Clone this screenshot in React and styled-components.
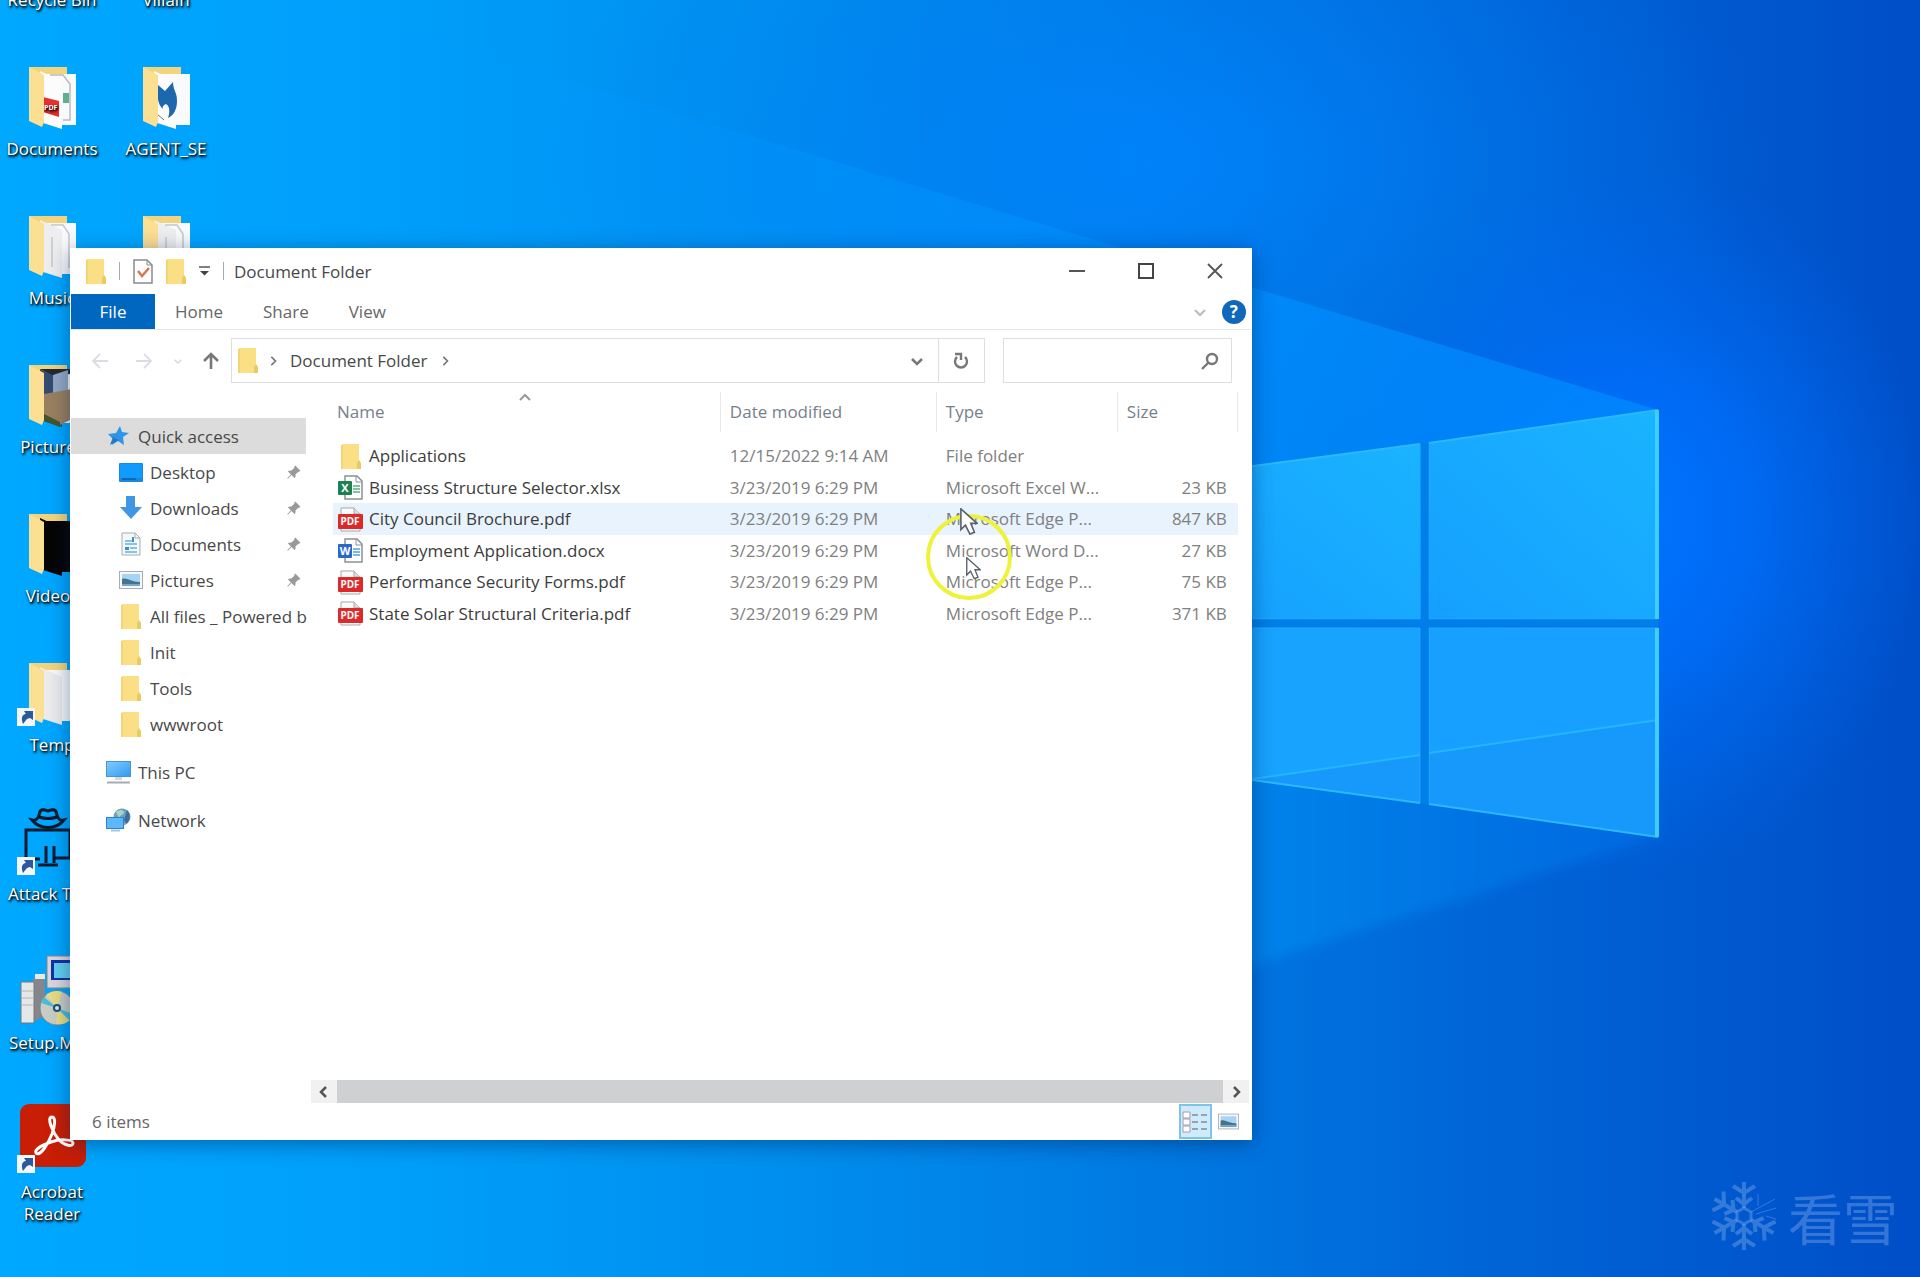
import React from "react";
import styled, { createGlobalStyle } from "styled-components";
import { BsPinAngleFill } from "react-icons/bs";

const GlobalStyle = createGlobalStyle`
  * {
    box-sizing: border-box;
  }
  body {
    margin: 0;
    font-family: "Open Sans", "Noto Sans", sans-serif;
    font-size: 17px;
    color: #484848;
  }
  button {
    border: none;
    background: none;
    padding: 0;
    font: inherit;
    color: inherit;
  }
  svg {
    display: block;
    flex-shrink: 0;
  }
`;

/* ---------- icons ---------- */

const FolderIcon = () => (
  <svg width="20" height="25" viewBox="0 0 20 25">
    <path d="M1 0h17v17l2 2v6H1z" fill="#fbdf85" />
    <path d="M0 1h2v24H0z" fill="#f5d478" />
    <path d="M16 25v-6l2-3 2 3v6z" fill="#e9cb63" />
  </svg>
);

const CheckDocIcon = () => (
  <svg width="20" height="25" viewBox="0 0 20 25">
    <path d="M1 1h13l5 5v18H1z" fill="#fff" stroke="#8b8b8f" strokeWidth="1.5" />
    <path d="M14 1v5h5" fill="none" stroke="#8b8b8f" />
    <path d="M5 12l4 5 7-8" fill="none" stroke="#e0744f" strokeWidth="2.5" />
  </svg>
);

const Chevron = ({ dir = "down", size = 12, color = "#777", weight = 2 }) => {
  const turn = { down: 0, left: 90, up: 180, right: 270 }[dir];
  return (
    <svg width={size} height={size} viewBox="0 0 12 12">
      <path
        d="M1 4l5 5 5-5"
        fill="none"
        stroke={color}
        strokeWidth={weight}
        transform={`rotate(${turn} 6 6)`}
      />
    </svg>
  );
};

const Arrow = ({ dir = "left", color = "#dcdce2" }) => {
  const turn = { left: 0, up: 90, right: 180 }[dir];
  return (
    <svg width="18" height="18" viewBox="0 0 18 18">
      <path
        d="M17 9H2M9 2L2 9l7 7"
        fill="none"
        stroke={color}
        strokeWidth={dir === "up" ? 2.6 : 1.8}
        transform={`rotate(${turn} 9 9)`}
      />
    </svg>
  );
};

const RefreshIcon = () => (
  <svg width="16" height="18" viewBox="0 0 16 18" fill="none" stroke="#777" strokeWidth="2.4">
    <path d="M12 5a6 6 0 1 1-8 0" />
    <path d="M2 2h6v6" />
  </svg>
);

const SearchIcon = () => (
  <svg width="18" height="18" viewBox="0 0 18 18" fill="none" stroke="#777" strokeWidth="2.4">
    <circle cx="11" cy="7" r="5" />
    <path d="M7.5 10.5L1 17" />
  </svg>
);

const StarIcon = () => (
  <svg width="21" height="20" viewBox="0 0 21 20">
    <path d="M12 0l2 6 7 1-6 4 1 8-6-4-6 4 1-6-5-5 8-1z" fill="#2e96e6" />
    <path d="M5 11l6 3-9 5z" fill="#2379c4" />
  </svg>
);

const DesktopIcon = () => (
  <svg width="24" height="19" viewBox="0 0 24 19">
    <rect width="24" height="19" rx="1" fill="#1b87e0" />
    <rect x="1" y="1" width="22" height="14" fill="#129bff" />
    <path d="M3 16h14" stroke="#0b5ea8" strokeWidth="1.5" />
  </svg>
);

const DownloadIcon = () => (
  <svg width="24" height="24" viewBox="0 0 24 24">
    <path d="M7 0h9v11h7L12 23 1 11h6z" fill="#4096e6" />
  </svg>
);

const DocumentIcon = () => (
  <svg width="20" height="24" viewBox="0 0 20 24">
    <path d="M1 1h13l5 5v17H1z" fill="#f5f8fa" stroke="#a5acb3" />
    <path d="M14 1v5h5" fill="none" stroke="#a5acb3" />
    <path d="M4 9h7M4 12h12M9 16h7M4 20h12" stroke="#62b1df" strokeWidth="1.6" />
    <path d="M4 15h4v3H4zM11 5h2v5h-2z" fill="#3c91c8" />
  </svg>
);

const PictureIcon = ({ width = 24, height = 18 }) => (
  <svg width={width} height={height} viewBox="0 0 24 18">
    <rect x=".5" y=".5" width="23" height="17" fill="#f6f8fa" stroke="#a9aeb5" />
    <rect x="3" y="3" width="18" height="12" fill="#a6d4f6" />
    <path d="M3 8c5-2 8 3 18 3v4H3z" fill="#42758a" />
    <path d="M3 13h18v2H3z" fill="#7aa7c9" />
  </svg>
);

const PcIcon = () => (
  <svg width="25" height="23" viewBox="0 0 25 23">
    <defs>
      <linearGradient id="screen" x1="0" y1="0" x2="1" y2="1">
        <stop offset="0" stopColor="#85cbff" />
        <stop offset="1" stopColor="#2f9bf2" />
      </linearGradient>
    </defs>
    <rect x=".5" y=".5" width="24" height="15" fill="url(#screen)" stroke="#4795cf" />
    <path d="M9 16h7v3H9z" fill="#d3d8dc" />
    <path d="M1 21.5h23" stroke="#a6abb0" strokeWidth="2" />
  </svg>
);

const NetworkIcon = () => (
  <svg width="25" height="24" viewBox="0 0 25 24">
    <circle cx="16" cy="9" r="8.5" fill="#6c9fc0" />
    <path d="M10 4c4-3 7-2 8 0s-4 3-5 6zM19 8l5-1-1 6-4 3z" fill="#a5d3c4" />
    <path d="M21 2c4 4 4 10-1 14l-2-4z" fill="#3a6f9c" />
    <rect x=".5" y="9.5" width="17" height="11" fill="#5cb7fb" stroke="#2f82c9" />
    <path d="M5 22.5h9" stroke="#a2c7e4" strokeWidth="2" />
  </svg>
);

const IconText = styled.text`
  font-family: "Open Sans", sans-serif;
  font-weight: 700;
  fill: #fff;
`;

const OfficeIcon = ({ letter, color, light }) => (
  <svg width="25" height="25" viewBox="0 0 25 25">
    <path d="M7 1h12l5 5v18H7z" fill="#fff" stroke="#8c9095" strokeWidth="1.5" />
    <path d="M18 1v6h6" fill="none" stroke="#8c9095" />
    <path d="M15 11h7M15 14h7M15 17h7" stroke={light} strokeWidth="1.8" />
    <rect x="0" y="6" width="14" height="14" rx="1" fill={color} />
    <IconText x="7" y="17" fontSize="11" textAnchor="middle">
      {letter}
    </IconText>
  </svg>
);

const PdfIcon = () => (
  <svg width="25" height="25" viewBox="0 0 25 25">
    <path d="M3 1h13l6 6v17H3z" fill="#fbfbfb" stroke="#a9a5a5" />
    <path d="M16 1v6h6" fill="#ddd" stroke="#a9a5a5" />
    <rect x="0" y="7" width="25" height="15" rx="1" fill="#dc2a2a" />
    <IconText x="12" y="18" fontSize="10" textAnchor="middle">
      PDF
    </IconText>
  </svg>
);

const fileIcons = {
  folder: <FolderIcon />,
  xlsx: <OfficeIcon letter="X" color="#1d8153" light="#7bc7a0" />,
  docx: <OfficeIcon letter="W" color="#2b68c8" light="#7bb7ee" />,
  pdf: <PdfIcon />,
};

/* ---------- desktop icons ---------- */

const OpenFolder = ({ paper = "#f3f3f3", back = "#f8fafc", children }) => (
  <svg width="64" height="68" viewBox="0 0 64 68" overflow="visible">
    <path d="M9 3h38v44H9z" fill="#f3d47c" />
    <path d="M25 10h31v51H41z" fill={back} />
    <path d="M20 7l22 10v48L20 58z" fill={paper} />
    {children}
    <path d="M9 3l15 8v47l-2 5L9 57z" fill="#fbdf93" />
  </svg>
);

const ShortcutMark = () => (
  <g>
    <rect x="-3" y="48" width="18" height="18" fill="#f3f6fa" />
    <path d="M3 64c-3-8 1-10 3-10l-2-3h9v9l-3-2c-3 0-4 2-7 6z" fill="#2c599c" />
  </g>
);

const DocumentsFolder = () => (
  <OpenFolder paper="#fcfcfc">
    <path d="M30 11h13l7 9v36h-7" fill="none" stroke="#b6bcc0" strokeWidth="1.5" />
    <path d="M43 29h6v10h-6z" fill="#5fb08d" />
    <path d="M23 33l16 4v16l-16-5z" fill="#e72f2d" />
    <IconText x="24" y="46" fontSize="7">
      PDF
    </IconText>
  </OpenFolder>
);

const AgentFolder = () => (
  <OpenFolder paper="#fcfcfc">
    <path
      d="M24 21l7 6 8-9c0 8 4 10 4 19 0 8-3 14-9 17 2-5 2-12-2-14-3 1-4 3-3 5-6-5-6-15-5-24z"
      fill="#1d67ac"
    />
    <path d="M23 50l7 6" stroke="#777" />
  </OpenFolder>
);

const PapersFolder = () => (
  <OpenFolder paper="#eeeeee">
    <path d="M31 12h12l6 9v34M32 24v30" fill="none" stroke="#c4c8ca" strokeWidth="1.5" />
  </OpenFolder>
);

const PicturesFolder = () => (
  <OpenFolder paper="#334c72">
    <path d="M20 7h30v5l-16 2z" fill="#232a35" />
    <path d="M33 13l15-5v24l-15 2z" fill="#93a8c4" />
    <path d="M24 32l28-5v30l-12 6-16-8z" fill="#9a8060" />
    <path d="M24 52l16 8v5l-16-6z" fill="#45542f" />
  </OpenFolder>
);

const TempFolder = () => (
  <>
    <svg width="64" height="68" viewBox="0 0 64 68" overflow="visible">
      <path d="M9 3h38v44H9z" fill="#f3d47c" />
      <path d="M25 10h31v51H41z" fill="#f8fafc" />
      <path d="M20 7l22 10v48L20 58z" fill="#ececec" />
      <path d="M9 3l15 8v47l-2 5L9 57z" fill="#fbdf93" />
      <ShortcutMark />
    </svg>
  </>
);

const AttackIcon = () => (
  <svg width="64" height="68" viewBox="0 0 64 68" overflow="visible">
    <g fill="none" stroke="#07182c" strokeWidth="3">
      <path d="M12 11c4 1 6-1 7-5 1-6 3-6 9-4 6-2 8-2 9 4 1 4 3 6 7 5-8 10-24 10-32 0z" />
      <path d="M19 8c6 2 12 2 18 0M6 48V21h44v28H33M20 50h-5M18 56h20M26 54V37M34 54V37" />
    </g>
    <ShortcutMark />
  </svg>
);

const SetupIcon = () => (
  <svg width="64" height="68" viewBox="0 0 64 68" overflow="visible">
    <path d="M27-2h34v32H27z" fill="#dad8dc" stroke="#85858b" />
    <path d="M31 2h27v20H31z" fill="#1230a8" />
    <path d="M34 5h22v15H34z" fill="#62cfee" />
    <path d="M13 21l12-7v44l-12 6z" fill="#85858c" />
    <path d="M15 16h10v5H15z" fill="#e8e8e8" />
    <path d="M1 24h13v41H1z" fill="#e6e7e9" stroke="#77787c" />
    <path d="M2 33h11M2 40h11M2 47h11" stroke="#b3b4b6" />
    <circle cx="37" cy="50" r="17" fill="#c9cdc5" stroke="#81868a" />
    <path d="M37 50L26 37c4-4 12-5 16-3zM37 50l13 12c-4 4-9 5-14 4z" fill="#e9dc82" />
    <path d="M37 50l-16-5 3-6zM37 50l16 6-4 6z" fill="#47bdd8" />
    <circle cx="37" cy="50" r="4" fill="#1c4f7c" />
    <circle cx="37" cy="50" r="2" fill="#d9eefa" />
  </svg>
);

const AcrobatIcon = () => (
  <svg width="64" height="68" viewBox="0 0 64 68" overflow="visible">
    <rect x="0" y="-3" width="66" height="63" rx="9" fill="#c81e05" />
    <path
      d="M32 10c-6 0 1 16 7 23 6 6 14 7 14 3s-14-4-22-1c-8 3-17 7-15 11 4 4 12-9 16-19 3-8 4-17 0-17z"
      fill="none"
      stroke="#fff"
      strokeWidth="3"
    />
    <ShortcutMark />
  </svg>
);

const desktopIcons = [
  { name: "Documents", icon: <DocumentsFolder />, col: 1, row: 2 },
  { name: "AGENT_SE", icon: <AgentFolder />, col: 2, row: 2 },
  { name: "Music", icon: <PapersFolder />, col: 1, row: 3 },
  { name: "", icon: <PapersFolder />, col: 2, row: 3 },
  { name: "Pictures", icon: <PicturesFolder />, col: 1, row: 4 },
  { name: "Videos", icon: <OpenFolder paper="#050505" back="#050505" />, col: 1, row: 5 },
  { name: "Temp", icon: <TempFolder />, col: 1, row: 6 },
  { name: "Attack Tool", icon: <AttackIcon />, col: 1, row: 7 },
  { name: "Setup.Misc", icon: <SetupIcon />, col: 1, row: 8 },
  { name: "Acrobat Reader", icon: <AcrobatIcon />, col: 1, row: 9 },
];

const quickAccess = [
  { name: "Desktop", icon: <DesktopIcon />, pinned: true },
  { name: "Downloads", icon: <DownloadIcon />, pinned: true },
  { name: "Documents", icon: <DocumentIcon />, pinned: true },
  { name: "Pictures", icon: <PictureIcon />, pinned: true },
  { name: "All files _ Powered b", icon: <FolderIcon /> },
  { name: "Init", icon: <FolderIcon /> },
  { name: "Tools", icon: <FolderIcon /> },
  { name: "wwwroot", icon: <FolderIcon /> },
];

const files = [
  { name: "Applications", kind: "folder", date: "12/15/2022 9:14 AM", type: "File folder", size: "" },
  { name: "Business Structure Selector.xlsx", kind: "xlsx", date: "3/23/2019 6:29 PM", type: "Microsoft Excel W...", size: "23 KB" },
  { name: "City Council Brochure.pdf", kind: "pdf", date: "3/23/2019 6:29 PM", type: "Microsoft Edge P...", size: "847 KB", active: true },
  { name: "Employment Application.docx", kind: "docx", date: "3/23/2019 6:29 PM", type: "Microsoft Word D...", size: "27 KB" },
  { name: "Performance Security Forms.pdf", kind: "pdf", date: "3/23/2019 6:29 PM", type: "Microsoft Edge P...", size: "75 KB" },
  { name: "State Solar Structural Criteria.pdf", kind: "pdf", date: "3/23/2019 6:29 PM", type: "Microsoft Edge P...", size: "371 KB" },
];

/* ---------- wallpaper ---------- */

const Wallpaper = () => (
  <WallpaperSvg viewBox="0 0 1920 1277" preserveAspectRatio="xMidYMid slice">
    <defs>
      <linearGradient id="sky" x1="0" y1="0" x2="1" y2="0">
        <stop offset="0" stopColor="#00a8ff" />
        <stop offset=".2" stopColor="#009ffa" />
        <stop offset=".4" stopColor="#008fee" />
        <stop offset=".6" stopColor="#007ae2" />
        <stop offset=".8" stopColor="#0062d6" />
        <stop offset="1" stopColor="#004ec8" />
      </linearGradient>
      <radialGradient id="glow">
        <stop offset="0" stopColor="#0074ff" />
        <stop offset=".4" stopColor="#0070ff" stopOpacity=".75" />
        <stop offset="1" stopColor="#0068f0" stopOpacity="0" />
      </radialGradient>
      <radialGradient id="haze">
        <stop offset="0" stopColor="#0084ff" stopOpacity=".8" />
        <stop offset="1" stopColor="#007cf4" stopOpacity="0" />
      </radialGradient>
      <linearGradient id="beam" x1="0" y1="0" x2="1" y2="0">
        <stop offset="0" stopColor="#00a4ff" stopOpacity="0" />
        <stop offset=".4" stopColor="#0098ff" stopOpacity=".3" />
        <stop offset=".75" stopColor="#008eff" stopOpacity=".7" />
        <stop offset="1" stopColor="#008cff" stopOpacity=".7" />
      </linearGradient>
      <linearGradient id="lowbeam" x1="0" y1="0" x2="1" y2="0">
        <stop offset="0" stopColor="#0096f4" stopOpacity=".8" />
        <stop offset=".5" stopColor="#008ef0" stopOpacity=".7" />
        <stop offset="1" stopColor="#0074ea" stopOpacity=".5" />
      </linearGradient>
      <linearGradient id="pane" x1="0" y1="1" x2="1" y2="0">
        <stop offset="0" stopColor="#159fff" />
        <stop offset="1" stopColor="#1ab4ff" />
      </linearGradient>
      <filter id="soften">
        <feGaussianBlur stdDeviation="6" />
      </filter>
    </defs>
    <rect width="1920" height="1277" fill="url(#sky)" />
    <ellipse cx="1150" cy="160" rx="620" ry="340" fill="url(#haze)" />
    <ellipse cx="1630" cy="520" rx="300" ry="360" fill="url(#glow)" />
    <path d="M300 0L1658 410V620H0V0z" fill="url(#beam)" />
    <path d="M700 620h958v217L1252 965 700 1140z" fill="url(#lowbeam)" filter="url(#soften)" />
    <path d="M1200 473l220-29v175h-220z" fill="url(#pane)" />
    <path d="M1429 443l229-33v209h-229z" fill="url(#pane)" />
    <path d="M1200 628h220v175l-220-30z" fill="#17a3ff" />
    <path d="M1429 628h229v209l-229-33z" fill="#17a0ff" />
    <path d="M1252 779l168-24v48zM1429 753l229-33v117l-229-33z" fill="#1798fb" />
    <path d="M1252 779l168-24M1429 753l229-33" stroke="#25b6ff" strokeWidth="2" />
    <path d="M1200 619h220M1429 619h229M1200 628h220M1429 628h229" stroke="#23acff" />
    <path
      d="M1200 473l220-29M1429 443l229-33M1252 780l168 23M1429 804l229 33"
      stroke="#2cb8ff"
      strokeWidth="2"
    />
    <path d="M1420 444v175M1429 443v176M1420 628v175M1429 628v176" stroke="#23acff" />
    <path d="M1200 623h458M1425 443v361" stroke="#007fe8" strokeWidth="7" />
    <path d="M1657 410v209M1657 628v209" stroke="#3fcfff" strokeWidth="4" />
  </WallpaperSvg>
);

const SnowflakeIcon = () => (
  <svg width="64" height="72" viewBox="-32 -36 64 72" fill="none" stroke="currentColor" strokeWidth="4">
    <path d="M0-8l7 4v8L0 8l-7-4v-8z" strokeWidth="3" />
    {[0, 120, 180, 240, 300].map((angle) => (
      <path key={angle} d="M0-8v-26M-11-30L0-23l11-7M-8-18l8 6 8-6" transform={`rotate(${angle})`} />
    ))}
    <path d="M7-4l24-13M12-2l20-6M14-10v-12M22 0l10 3" strokeWidth="1" />
  </svg>
);

const Pointer = ({ width }) => (
  <svg width={width} viewBox="0 0 20 30">
    <path
      d="M1 1v23l5-5 5 10 5-2-4-10h7z"
      fill="#fff"
      stroke="#59616e"
      strokeWidth="1.8"
    />
  </svg>
);

const App = () => {
  return (
    <Desktop>
      <GlobalStyle />
      <Wallpaper />
      <IconGrid>
        <TopLabel $col={1}>Recycle Bin</TopLabel>
        <TopLabel $col={2}>Villain</TopLabel>
        {desktopIcons.map((item) => (
          <DesktopItem key={`${item.col}-${item.row}`} $col={item.col} $row={item.row}>
            {item.icon}
            <span>{item.name}</span>
          </DesktopItem>
        ))}
      </IconGrid>

      <ExplorerWindow>
        <TitleBar>
          <FolderIcon />
          <Separator />
          <TitleButton aria-label="Properties">
            <CheckDocIcon />
          </TitleButton>
          <TitleButton aria-label="New folder">
            <FolderIcon />
          </TitleButton>
          <TitleButton aria-label="Customize toolbar">
            <svg width="11" height="10" viewBox="0 0 11 10">
              <path d="M0 1h11" stroke="#555" strokeWidth="1.5" />
              <path d="M1 5h9L5.5 9.5z" fill="#444" />
            </svg>
          </TitleButton>
          <Separator />
          <Title>Document Folder</Title>
          <WindowButton aria-label="Minimize">
            <svg width="16" height="16" viewBox="0 0 16 16">
              <path d="M0 8h16" stroke="#555" strokeWidth="2" />
            </svg>
          </WindowButton>
          <WindowButton aria-label="Maximize">
            <svg width="16" height="16" viewBox="0 0 16 16">
              <rect x="1" y="1" width="14" height="14" fill="none" stroke="#444" strokeWidth="2" />
            </svg>
          </WindowButton>
          <WindowButton aria-label="Close">
            <svg width="16" height="16" viewBox="0 0 16 16">
              <path d="M1 1l14 14M15 1L1 15" stroke="#555" strokeWidth="1.8" />
            </svg>
          </WindowButton>
        </TitleBar>

        <Ribbon>
          <FileTab>File</FileTab>
          <Tab>Home</Tab>
          <Tab>Share</Tab>
          <Tab>View</Tab>
          <RibbonEnd>
            <button aria-label="Expand the ribbon">
              <Chevron color="#bbb" />
            </button>
            <HelpButton aria-label="Help">?</HelpButton>
          </RibbonEnd>
        </Ribbon>

        <AddressBar>
          <History>
            <button aria-label="Back">
              <Arrow dir="left" />
            </button>
            <button aria-label="Forward">
              <Arrow dir="right" />
            </button>
            <button aria-label="Recent locations">
              <Chevron size={8} color="#d5d5db" />
            </button>
            <button aria-label="Up">
              <Arrow dir="up" color="#777" />
            </button>
          </History>
          <PathBox>
            <FolderIcon />
            <Chevron dir="right" size={10} />
            <PathButton>Document Folder</PathButton>
            <Chevron dir="right" size={10} />
            <DropButton aria-label="Previous locations">
              <Chevron weight={2.5} />
            </DropButton>
          </PathBox>
          <RefreshButton aria-label="Refresh">
            <RefreshIcon />
          </RefreshButton>
          <SearchBox>
            <input type="text" aria-label="Search Document Folder" />
            <SearchIcon />
          </SearchBox>
        </AddressBar>

        <Body>
          <NavPane>
            <NavRow href="#quick" $root $selected>
              <NavIcon>
                <StarIcon />
              </NavIcon>
              <span>Quick access</span>
            </NavRow>
            {quickAccess.map((item) => (
              <NavRow href="#folder" key={item.name}>
                <NavIcon>{item.icon}</NavIcon>
                <span>{item.name}</span>
                {item.pinned && <BsPinAngleFill size={15} color="#999" />}
              </NavRow>
            ))}
            <NavRow href="#pc" $root $spaced>
              <NavIcon>
                <PcIcon />
              </NavIcon>
              <span>This PC</span>
            </NavRow>
            <NavRow href="#network" $root $spaced>
              <NavIcon>
                <NetworkIcon />
              </NavIcon>
              <span>Network</span>
            </NavRow>
          </NavPane>

          <FilePane>
            <FileTable>
              <colgroup>
                <col />
                <col width="216" />
                <col width="181" />
                <col width="120" />
              </colgroup>
              <thead>
                <tr>
                  <th>
                    <HeadCell $first>
                      Name
                      <SortMark>
                        <Chevron dir="up" color="#999" />
                      </SortMark>
                    </HeadCell>
                  </th>
                  <th>
                    <HeadCell>Date modified</HeadCell>
                  </th>
                  <th>
                    <HeadCell>Type</HeadCell>
                  </th>
                  <th>
                    <HeadCell>Size</HeadCell>
                  </th>
                </tr>
              </thead>
              <tbody>
                {files.map((file) => (
                  <FileRow key={file.name} $active={file.active}>
                    <td>
                      <FileName>
                        <FileIconBox>{fileIcons[file.kind]}</FileIconBox>
                        {file.name}
                      </FileName>
                    </td>
                    <td>{file.date}</td>
                    <td>{file.type}</td>
                    <td>{file.size}</td>
                  </FileRow>
                ))}
              </tbody>
            </FileTable>
            <ScrollBar>
              <button aria-label="Scroll left">
                <Chevron dir="left" color="#555" weight={2.5} />
              </button>
              <ScrollThumb />
              <button aria-label="Scroll right">
                <Chevron dir="right" color="#555" weight={2.5} />
              </button>
            </ScrollBar>
          </FilePane>
        </Body>

        <StatusBar>
          <span>6 items</span>
          <ViewButton aria-label="Details" $on>
            <svg width="26" height="22" viewBox="0 0 26 22">
              <path d="M1 1h7v6H1zM1 8h7v6H1zM1 15h7v6H1z" fill="#fff" stroke="#a99aae" />
              <path d="M10 4h6M10 11h6M10 18h6M19 4h6M19 11h6M19 18h6" stroke="#889" strokeWidth="1.5" />
            </svg>
          </ViewButton>
          <ViewButton aria-label="Large icons">
            <PictureIcon width={21} height={17} />
          </ViewButton>
        </StatusBar>
      </ExplorerWindow>

      <ClickRing />
      <PointerSpot $left={960} $top={508}>
        <Pointer width={18} />
      </PointerSpot>
      <PointerSpot $left={966} $top={557}>
        <Pointer width={15} />
      </PointerSpot>

      <Watermark>
        <SnowflakeIcon />
        <span>看雪</span>
      </Watermark>
    </Desktop>
  );
};

const Desktop = styled.div`
  position: relative;
  min-height: 100vh;
  overflow: hidden;
  background: #0078dc;
`;

const WallpaperSvg = styled.svg`
  position: absolute;
  inset: 0;
  width: 100%;
  height: 100%;
`;

const IconGrid = styled.div`
  position: relative;
  display: grid;
  grid-template-columns: 104px 104px;
  grid-template-rows: 11px repeat(8, 149px);
  column-gap: 10px;
  color: #fff;
  font-size: 17px;
  line-height: 22px;
  text-align: center;
  text-shadow: 1px 1px 2px #000, 1px 2px 3px rgba(0, 0, 0, 0.9);
`;

const TopLabel = styled.div`
  grid-column: ${({ $col }) => $col};
  grid-row: 1;
  align-self: end;
`;

const DesktopItem = styled.div`
  grid-column: ${({ $col }) => $col};
  grid-row: ${({ $row }) => $row};
  display: flex;
  flex-direction: column;
  align-items: center;
  gap: 6px;
  padding-top: 53px;
`;

const ExplorerWindow = styled.main`
  position: absolute;
  top: 248px;
  bottom: 137px;
  left: 70px;
  right: 34.8%;
  display: flex;
  flex-direction: column;
  padding: 0 1px;
  background: #fff;
  box-shadow: 0 4px 20px rgba(0, 30, 80, 0.45);
`;

const TitleBar = styled.header`
  display: flex;
  align-items: center;
  gap: 13px;
  height: 46px;
  padding: 0 8px 0 15px;
`;

const Separator = styled.div`
  width: 1px;
  height: 18px;
  background: #aaa;
`;

const TitleButton = styled.button`
  display: flex;
`;

const Title = styled.h1`
  flex: 1;
  margin: 0;
  margin-left: -3px;
  font-size: 17px;
  font-weight: 400;
`;

const WindowButton = styled.button`
  display: flex;
  align-items: center;
  justify-content: center;
  width: 56px;
  height: 46px;
`;

const Ribbon = styled.nav`
  display: flex;
  height: 36px;
  border-bottom: 1px solid #e6e6e6;
  color: #666;
`;

const Tab = styled.button`
  padding: 0 20px;
`;

const FileTab = styled(Tab)`
  width: 84px;
  background: #0067c0;
  color: #fff;
`;

const RibbonEnd = styled.div`
  display: flex;
  align-items: center;
  gap: 16px;
  margin-left: auto;
  padding-right: 5px;
`;

const HelpButton = styled.button`
  width: 24px;
  height: 24px;
  border-radius: 50%;
  background: #0f68b8;
  color: #fff;
  font-weight: 700;
  line-height: 24px;
`;

const AddressBar = styled.div`
  display: flex;
  height: 62px;
  padding: 8px 19px 9px 0;
`;

const History = styled.div`
  display: flex;
  align-items: center;
  justify-content: space-between;
  width: 160px;
  padding: 0 11px 0 20px;

  button {
    display: flex;
  }
  button:nth-child(2) {
    margin-left: 6px;
  }
`;

const PathBox = styled.div`
  flex: 1;
  display: flex;
  align-items: center;
  gap: 10px;
  padding-left: 6px;
  border: 1px solid #dedede;
`;

const PathButton = styled.button`
  padding: 0 2px;
`;

const DropButton = styled.button`
  display: flex;
  align-items: center;
  margin-left: auto;
  padding: 0 15px;
`;

const RefreshButton = styled.button`
  display: flex;
  align-items: center;
  justify-content: center;
  width: 46px;
  border: 1px solid #dedede;
  border-left: none;
`;

const SearchBox = styled.div`
  display: flex;
  align-items: center;
  width: 229px;
  margin-left: 18px;
  padding: 0 12px;
  border: 1px solid #dedede;

  input {
    flex: 1;
    min-width: 0;
    border: none;
    outline: none;
    background: none;
    font: inherit;
  }
`;

const Body = styled.div`
  flex: 1;
  display: flex;
  min-height: 0;
`;

const NavPane = styled.nav`
  width: 235px;
  padding-top: 26px;
`;

const NavRow = styled.a`
  display: flex;
  align-items: center;
  gap: 7px;
  height: 36px;
  margin-top: ${({ $spaced }) => ($spaced ? "12px" : "0")};
  padding: 0 5px 0 ${({ $root }) => ($root ? "35px" : "47px")};
  background: ${({ $selected }) => ($selected ? "#dcdcdc" : "transparent")};
  color: inherit;
  text-decoration: none;
  white-space: nowrap;

  > svg {
    margin-left: auto;
  }
`;

const NavIcon = styled.div`
  display: flex;
  justify-content: center;
  flex: 0 0 25px;
`;

const FilePane = styled.section`
  flex: 1;
  display: flex;
  flex-direction: column;
  justify-content: space-between;
  padding: 0 2px 0 5px;
`;

const FileTable = styled.table`
  align-self: stretch;
  table-layout: fixed;
  width: auto;
  margin: 0 11px 0 22px;
  border-collapse: collapse;
  color: #808080;

  th {
    height: 48px;
    padding: 0;
    font-weight: 400;
    text-align: left;
    vertical-align: top;
  }
  td {
    height: 32px;
    padding: 0 0 0 9px;
    line-height: 20px;
    white-space: nowrap;
  }
  tr:nth-child(even) td {
    height: 31px;
  }
  td:first-child {
    padding-left: 5px;
    color: #3c3c3c;
  }
  td:last-child {
    padding-right: 11px;
    text-align: right;
  }
`;

const HeadCell = styled.div`
  position: relative;
  height: 40px;
  padding-left: ${({ $first }) => ($first ? "4px" : "9px")};
  border-right: 1px solid #e8e8e8;
  color: #76808c;
  line-height: 40px;
`;

const SortMark = styled.span`
  position: absolute;
  top: 0;
  left: 48%;
`;

const FileRow = styled.tr`
  background: ${({ $active }) => ($active ? "#e8f3fe" : "transparent")};
`;

const FileName = styled.div`
  display: flex;
  align-items: center;
  gap: 6px;
`;

const FileIconBox = styled.span`
  display: flex;
  justify-content: center;
  width: 25px;
`;

const ScrollBar = styled.div`
  display: flex;
  height: 23px;
  background: #f1f1f1;

  button {
    display: flex;
    align-items: center;
    justify-content: center;
    width: 26px;
  }
`;

const ScrollThumb = styled.div`
  flex: 1;
  background: #cfd0d1;
`;

const StatusBar = styled.footer`
  display: flex;
  align-items: center;
  height: 37px;
  padding: 0 6px 0 21px;
  color: #666;

  span {
    flex: 1;
  }
`;

const ViewButton = styled.button`
  display: flex;
  align-items: center;
  justify-content: center;
  width: 33px;
  height: 35px;
  border: 2px solid ${({ $on }) => ($on ? "#7fc4e6" : "transparent")};
  background: ${({ $on }) => ($on ? "#cdebfa" : "transparent")};
`;

const ClickRing = styled.div`
  position: absolute;
  top: 514px;
  left: 926px;
  width: 86px;
  height: 86px;
  border: 4px solid #eef23a;
  border-radius: 50%;
`;

const PointerSpot = styled.div`
  position: absolute;
  top: ${({ $top }) => $top}px;
  left: ${({ $left }) => $left}px;
`;

const Watermark = styled.div`
  position: absolute;
  right: 22px;
  bottom: 25px;
  display: flex;
  align-items: center;
  gap: 12px;
  color: rgba(130, 175, 235, 0.4);
  font-family: "Noto Sans CJK SC", sans-serif;
  font-size: 55px;
  font-weight: 400;
  line-height: 72px;
`;

export default App;
